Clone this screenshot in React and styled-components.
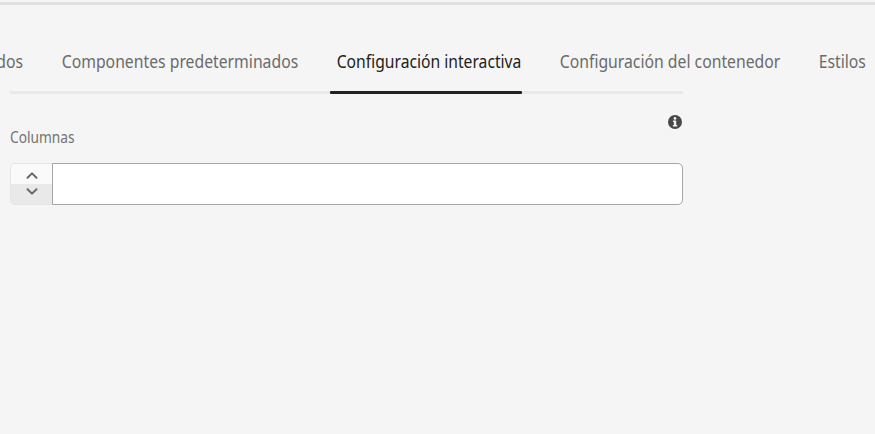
import React from "react";
import styled, { createGlobalStyle } from "styled-components";

const GlobalStyle = createGlobalStyle`
  * { box-sizing: border-box; }
  html, body { margin: 0; background: #f5f5f5; overflow: hidden; }
  body { font-family: "Noto Sans", "Open Sans", sans-serif; }
`;

const Page = styled.main`
  width: 875px;
  height: 434px;
  padding-top: 2px;
  overflow: hidden;
  background: #f5f5f5;
`;

const TopRule = styled.div`
  height: 3px;
  background: #e1e1e1;
`;

const TabList = styled.nav`
  display: grid;
  grid-template-columns: 23px 237px 185px 221px 48px;
  column-gap: 38px;
  height: 86px;
  padding-top: 42px;
`;

const Tab = styled.a`
  display: flex;
  justify-content: ${({ $clipped }) => ($clipped ? "flex-end" : "flex-start")};
  height: 28px;
  padding-left: ${({ $clipped }) => ($clipped ? "0" : "0.8px")};
  line-height: 28px;
  font-size: 17.5px;
  white-space: nowrap;
  transform: scaleX(${({ $condense = 0.9 }) => $condense});
  transform-origin: ${({ $clipped }) => ($clipped ? "right" : "left")} center;
  color: ${({ $selected }) => ($selected ? "#222222" : "#6b6b6b")};
`;

const Content = styled.section`
  width: 673px;
  margin-left: 10px;
`;

const Track = styled.div`
  height: 3px;
  padding-left: 320px;
  background: #e9e9e9;
`;

const Indicator = styled.div`
  width: 191.5px;
  height: 3px;
  border-radius: 1px;
  background: #222222;
`;

const FieldHeader = styled.div`
  display: flex;
  justify-content: space-between;
  height: 69px;
  padding-top: 21px;
`;

const Label = styled.label`
  margin-top: 10px;
  height: 24px;
  line-height: 24px;
  font-size: 15.5px;
  transform: scaleX(0.885);
  transform-origin: left center;
  color: #737373;
`;

const InfoIcon = styled.svg`
  width: 14px;
  height: 14px;
  margin-right: 1px;
`;

const NumberField = styled.div`
  display: flex;
  height: 42px;
`;

const Stepper = styled.div`
  width: 42px;
  display: flex;
  flex-direction: column;
  border: 1px solid #e5e5e5;
  border-right: 0;
  border-radius: 5px 0 0 5px;
  overflow: hidden;
`;

const StepButton = styled.button`
  display: flex;
  height: 20px;
  justify-content: center;
  align-items: ${({ $down }) => ($down ? "flex-start" : "flex-end")};
  padding: ${({ $down }) => ($down ? "4px 0 0" : "0 0 5px")};
  border: 0;
  background: ${({ $down }) => ($down ? "#e9e9e9" : "#fafafa")};
`;

const Chevron = styled.svg`
  width: 12px;
  height: 7px;
  fill: none;
  stroke: #686868;
  stroke-width: 2;
  stroke-linecap: round;
  stroke-linejoin: round;
`;

const Input = styled.input`
  flex: 1;
  min-width: 0;
  padding: 0 12px;
  border: 1px solid #a6a6a6;
  border-radius: 0 5px 5px 0;
  background: #ffffff;
  font: inherit;
  outline: none;
`;

export default function App() {
  return (
    <>
      <GlobalStyle />
      <Page>
        <TopRule />
        <TabList>
          <Tab $clipped>dos</Tab>
          <Tab>Componentes predeterminados</Tab>
          <Tab $selected $condense={0.895}>Configuración interactiva</Tab>
          <Tab>Configuración del contenedor</Tab>
          <Tab>Estilos</Tab>
        </TabList>
        <Content>
          <Track><Indicator /></Track>
          <FieldHeader>
            <Label htmlFor="columns">Columnas</Label>
            <InfoIcon viewBox="0 0 14 14">
              <circle cx="7" cy="7" r="7" fill="#484848" />
              <circle cx="7" cy="3.4" r="1.35" fill="#f5f5f5" />
              <path d="M5 5.6h3.2v4.4h1v1.4H4.9V10h1V7H5z" fill="#f5f5f5" />
            </InfoIcon>
          </FieldHeader>
          <NumberField>
            <Stepper>
              <StepButton>
                <Chevron viewBox="0 0 12 7"><path d="M1.5 5.7 6 1.4l4.5 4.3" /></Chevron>
              </StepButton>
              <StepButton $down>
                <Chevron viewBox="0 0 12 7"><path d="M1.5 1.3 6 5.6l4.5-4.3" /></Chevron>
              </StepButton>
            </Stepper>
            <Input id="columns" />
          </NumberField>
        </Content>
      </Page>
    </>
  );
}
